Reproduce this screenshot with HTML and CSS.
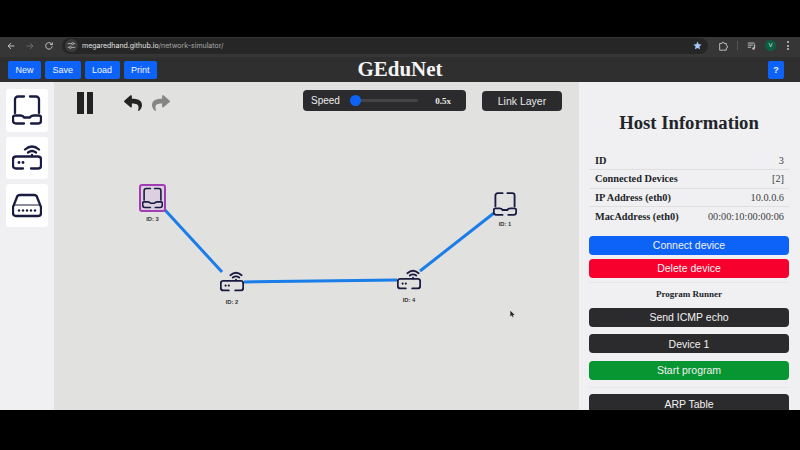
FILE: index.html
```html
<!DOCTYPE html>
<html lang="en">
<head>
  <meta charset="UTF-8">
  <meta name="viewport" content="width=device-width, initial-scale=1.0">
  <title>GEduNet</title>
  <link rel="stylesheet" href="styles.css">
</head>
<body>
  <svg class="defs" width="0" height="0">
    <symbol id="laptop" viewBox="0 0 30 30">
      <g fill="none" stroke="currentColor" stroke-width="2.300" stroke-linecap="round" stroke-linejoin="round">
        <path d="M12 1.500H6a3 3 0 0 0-3 3V18"/>
        <path d="M18 1.500h6a3 3 0 0 1 3 3V18"/>
        <path d="M12 28.500H4q-3 0-3-3v-3q0-2 2-2h5q3 0 4 2h6q1-2 4-2h5q2 0 2 2v3q0 3-3 3h-7"/>
      </g>
    </symbol>
    <symbol id="router" viewBox="0 0 30 30">
      <g fill="none" stroke="currentColor" stroke-width="2.300" stroke-linecap="round" stroke-linejoin="round">
        <path d="M13 6.500q7-6 14 0"/>
        <path d="M16 9.500q4-3 8 0"/>
        <path d="M20 12v1"/>
        <path d="M11 25.500H4q-3 0-3-3v-6q0-3 3-3h22q3 0 3 3v6q0 3-3 3h-7"/>
      </g>
      <circle cx="7" cy="19.500" r="1.400" fill="currentColor"/>
      <circle cx="11" cy="19.500" r="1.400" fill="currentColor"/>
    </symbol>
    <symbol id="switch" viewBox="0 0 30 30">
      <g fill="none" stroke="currentColor" stroke-width="2.300" stroke-linecap="round" stroke-linejoin="round">
        <path d="M1 17 5 7q.6-2 3-2h14q2.400 0 3 2l4 10v6q0 3-3 3H4q-3 0-3-3z"/>
        <path d="M3 15h24" stroke-width="1.200"/>
      </g>
      <g fill="currentColor">
        <circle cx="7" cy="20.500" r="1.200"/>
        <circle cx="11" cy="20.500" r="1.200"/>
        <circle cx="15" cy="20.500" r="1.200"/>
        <circle cx="19" cy="20.500" r="1.200"/>
        <circle cx="23" cy="20.500" r="1.200"/>
      </g>
    </symbol>
    <symbol id="reply" viewBox="0 0 512 512">
      <path fill="currentColor" d="M8.309 189.836L184.313 37.851C199.719 24.546 224 35.347 224 56.015v80.053c160.629 1.839 288 34.032 288 186.258 0 61.441-39.581 122.309-83.333 154.132-13.653 9.931-33.111-2.533-28.077-18.631 45.344-145.012-21.507-183.510-176.590-185.742V360c0 20.700-24.300 31.453-39.687 18.164l-176.004-152c-11.071-9.562-11.086-26.753 0-36.328z"/>
    </symbol>
  </svg>

  <div class="top-black"></div>

  <div class="browser">
    <div class="browser-nav">
      <svg class="b-icon" viewBox="0 0 12 12"><path d="M10 6H2.500M6 2.500 2.500 6 6 9.500" fill="none" stroke="#c4c4c4" stroke-width="1.200"/></svg>
      <svg class="b-icon" viewBox="0 0 12 12"><path d="M2 6h7.500M6 2.500 9.500 6 6 9.500" fill="none" stroke="#6c6c6c" stroke-width="1.200"/></svg>
      <svg class="b-icon" viewBox="0 0 12 12"><path d="M9.800 6.500A3.900 3.900 0 1 1 8.700 3.100L10 4.400M10 1.800v2.600H7.400" fill="none" stroke="#c4c4c4" stroke-width="1.200"/></svg>
    </div>
    <div class="address">
      <span class="tune">
        <svg viewBox="0 0 12 12"><path d="M1 3.500h5M9 3.500h2M1 8.500h2M6 8.500h5" stroke="#ccc" stroke-width="1" fill="none"/><circle cx="7.500" cy="3.500" r="1.400" fill="none" stroke="#ccc"/><circle cx="4.500" cy="8.500" r="1.400" fill="none" stroke="#ccc"/></svg>
      </span>
      <span class="url">megaredhand.github.io<span class="url-path">/network-simulator/</span></span>
      <svg class="star" viewBox="0 0 12 12"><path d="M6 .8 7.600 4.300l3.800.4-2.800 2.600.8 3.800L6 9.200l-3.400 1.900.8-3.800L.6 4.700l3.800-.4z" fill="#a8c7fa"/></svg>
    </div>
    <div class="browser-tools">
      <svg class="b-icon" viewBox="0 0 12 12"><path d="M2 3h2.500a1.500 1.500 0 0 1 3 0H10v2.500a1.500 1.500 0 0 1 0 3V11H2z" fill="none" stroke="#c8c8c8" stroke-width="1.100"/></svg>
      <span class="tool-sep"></span>
      <svg class="b-icon" viewBox="0 0 12 12"><path d="M1 2.500h8M1 5h6M1 7.500h4" stroke="#c0c0c0" stroke-width="1.200"/><path d="M9 4v4.500" stroke="#c0c0c0" stroke-width="1.500"/><circle cx="7.800" cy="9" r="1.500" fill="#c0c0c0"/></svg>
      <span class="avatar">V</span>
      <span class="dots"><i></i><i></i><i></i></span>
    </div>
  </div>

  <nav class="navbar">
    <div class="nav-left">
      <button class="nav-btn">New</button>
      <button class="nav-btn">Save</button>
      <button class="nav-btn">Load</button>
      <button class="nav-btn">Print</button>
    </div>
    <h1 class="brand">GEduNet</h1>
    <button class="nav-btn help">?</button>
  </nav>

  <main class="app">
    <aside class="palette">
      <div class="tile"><svg class="tile-icon"><use href="#laptop"/></svg></div>
      <div class="tile"><svg class="tile-icon"><use href="#router"/></svg></div>
      <div class="tile"><svg class="tile-icon"><use href="#switch"/></svg></div>
    </aside>

    <section class="canvas">
      <div class="controls">
        <div class="pause"><i></i><i></i></div>
        <div class="history">
          <svg class="arrow"><use href="#reply"/></svg>
          <svg class="arrow redo"><use href="#reply"/></svg>
        </div>
        <div class="speed">
          <span class="speed-label">Speed</span>
          <span class="track"><span class="thumb"></span></span>
          <span class="speed-value">0.5x</span>
        </div>
        <button class="layer-btn">Link Layer</button>
      </div>

      <svg class="links" width="525" height="328">
        <line x1="111" y1="128" x2="168" y2="190"/>
        <line x1="190" y1="200" x2="343" y2="198"/>
        <line x1="366" y1="189" x2="440" y2="131"/>
      </svg>

      <div class="node selected" style="left:85px;top:102px">
        <svg class="node-icon big"><use href="#laptop"/></svg>
        <span class="node-label">ID: 3</span>
      </div>
      <div class="node" style="left:439px;top:110px">
        <svg class="node-icon"><use href="#laptop"/></svg>
        <span class="node-label">ID: 1</span>
      </div>
      <div class="node" style="left:166px;top:188px">
        <svg class="node-icon"><use href="#router"/></svg>
        <span class="node-label">ID: 2</span>
      </div>
      <div class="node" style="left:343px;top:186px">
        <svg class="node-icon"><use href="#router"/></svg>
        <span class="node-label">ID: 4</span>
      </div>

      <svg class="cursor" width="5" height="8" viewBox="0 0 7 10"><path d="M.5.500v8l2-1.800 1.300 3 1.200-.5-1.300-2.900H6.500z" fill="#222"/></svg>
    </section>

    <aside class="info">
      <h2 class="info-title">Host Information</h2>
      <div class="rows">
        <div class="row"><b>ID</b><span>3</span></div>
        <div class="row"><b>Connected Devices</b><span>[2]</span></div>
        <div class="row"><b>IP Address (eth0)</b><span>10.0.0.6</span></div>
        <div class="row"><b>MacAddress (eth0)</b><span>00:00:10:00:00:06</span></div>
      </div>
      <button class="btn blue first">Connect device</button>
      <button class="btn red">Delete device</button>
      <hr class="divider">
      <h3 class="runner-title">Program Runner</h3>
      <button class="btn dark">Send ICMP echo</button>
      <button class="btn dark">Device 1</button>
      <button class="btn green">Start program</button>
      <hr class="divider">
      <button class="btn dark">ARP Table</button>
    </aside>
  </main>

  <div class="bottom-black"></div>
</body>
</html>
```

FILE: styles.css
```css
* {
  box-sizing: border-box;
}
html, body {
  height: 100%;
}
body {
  margin: 0;
  background: #000;
  font-family: 'Liberation Sans', Arial, sans-serif;
  display: flex;
  flex-direction: column;
  overflow: hidden;
}
.defs {
  position: absolute;
}
.top-black {
  height: 37px;
  flex: none;
}
.bottom-black {
  height: 40px;
  flex: none;
}

/* browser chrome */
.browser {
  height: 20px;
  flex: none;
  background: #363636;
  display: flex;
  align-items: center;
  padding-bottom: 3px;
}
.browser-nav {
  display: flex;
  gap: 9px;
  padding-left: 6px;
  width: 62px;
}
.b-icon {
  width: 10px;
  height: 10px;
  display: block;
}
.address {
  width: 646px;
  height: 16px;
  border-radius: 8px;
  background: #262626;
  display: flex;
  align-items: center;
  padding: 0 6px 0 3px;
}
.tune {
  width: 13px;
  height: 13px;
  border-radius: 50%;
  background: #3c3c3c;
  display: flex;
  align-items: center;
  justify-content: center;
  margin-right: 4px;
}
.tune svg {
  width: 9px;
  height: 9px;
}
.url {
  flex: 1;
  font-family: 'Inter', 'Liberation Sans', sans-serif;
  font-size: 7px;
  color: #e3e3e3;
}
.url-path {
  color: #a9a9a9;
}
.star {
  width: 9px;
  height: 9px;
}
.browser-tools {
  flex: 1;
  display: flex;
  align-items: center;
  padding-left: 10px;
}
.tool-sep {
  width: 1px;
  height: 9px;
  background: #555;
  margin: 0 9px;
}
.avatar {
  width: 11px;
  height: 11px;
  border-radius: 50%;
  background: #0c5e42;
  color: #cfe8d8;
  font-size: 6px;
  text-align: center;
  line-height: 11px;
  margin-left: 8px;
}
.dots {
  display: flex;
  flex-direction: column;
  gap: 1.500px;
  margin-left: 11px;
}
.dots i {
  width: 2px;
  height: 2px;
  border-radius: 50%;
  background: #c8c8c8;
}

/* app navbar */
.navbar {
  height: 25px;
  flex: none;
  background: #2f2f2f;
  display: flex;
  align-items: center;
  justify-content: space-between;
  padding: 0 16px 0 8px;
  position: relative;
}
.nav-left {
  display: flex;
  gap: 4px;
}
.nav-btn {
  height: 18px;
  padding: 0 7.500px;
  border: none;
  border-radius: 2px;
  background: #0d63f8;
  color: #f0f4ff;
  font-family: inherit;
  font-size: 9px;
}
.help {
  width: 16px;
  padding: 0;
  font-weight: bold;
}
.brand {
  position: absolute;
  left: 0;
  right: 0;
  margin: 0;
  text-align: center;
  font-family: 'Liberation Serif', serif;
  font-size: 21px;
  color: #f4f4f4;
  pointer-events: none;
}

/* main */
.app {
  flex: 1;
  min-height: 0;
  display: flex;
}
.palette {
  width: 54px;
  flex: none;
  background: #f0eff1;
  display: flex;
  flex-direction: column;
  gap: 5px;
  padding: 7px 6px 0;
}
.tile {
  width: 42px;
  height: 42.500px;
  background: #fff;
  border-radius: 3px;
  display: flex;
  align-items: center;
  justify-content: center;
}
.tile-icon {
  width: 30px;
  height: 30px;
  color: #1a1b41;
}
.canvas {
  flex: 1;
  background: #e1e1df;
  position: relative;
}
.controls {
  display: flex;
  align-items: center;
  height: 22px;
  margin-top: 10px;
  padding-left: 23px;
  position: relative;
  z-index: 1;
}
.pause {
  display: flex;
  gap: 3px;
  width: 47px;
}
.pause i {
  width: 6.500px;
  height: 22px;
  background: #222;
}
.history {
  display: flex;
  gap: 10px;
  width: 179px;
}
.arrow {
  width: 18px;
  height: 18px;
  color: #232323;
}
.redo {
  color: #858585;
  transform: scaleX(-1);
}
.speed {
  width: 163px;
  height: 21px;
  border-radius: 4px;
  background: #2b2b2d;
  display: flex;
  align-items: center;
  align-self: flex-start;
  padding: 0 15px 0 8px;
  color: #ececec;
  font-size: 10px;
  margin: -2px 16px 0 0;
}
.speed-label {
  width: 39px;
}
.track {
  width: 68px;
  height: 3px;
  border-radius: 2px;
  background: #444;
  position: relative;
}
.thumb {
  position: absolute;
  left: 0;
  top: -4px;
  width: 11px;
  height: 11px;
  border-radius: 50%;
  background: #0d63f8;
}
.speed-value {
  flex: 1;
  text-align: right;
  font-family: 'Liberation Serif', serif;
  font-weight: bold;
  font-size: 9px;
}
.layer-btn {
  width: 80px;
  height: 20px;
  border: none;
  border-radius: 4px;
  background: #2b2b2d;
  color: #e8e8e8;
  font-family: inherit;
  font-size: 10.500px;
  align-self: flex-start;
  margin-top: -1px;
}
.links {
  position: absolute;
  left: 0;
  top: 0;
}
.links line {
  stroke: #1a7de8;
  stroke-width: 3;
}
.node {
  position: absolute;
  display: flex;
  flex-direction: column;
  align-items: center;
  width: 24px;
}
.node-icon {
  width: 24px;
  height: 24px;
  color: #1a1b41;
}
.node-label {
  margin-top: 5px;
  font-size: 5.800px;
  font-weight: bold;
  color: #333;
  white-space: nowrap;
}
.selected {
  width: 27px;
}
.selected .node-icon {
  width: 27px;
  height: 28px;
  padding: 1px;
  border: 2px solid #a23cb4;
  border-radius: 3px;
  background: #dccfe0;
}
.selected .node-label {
  margin-top: 4px;
}
.cursor {
  position: absolute;
  left: 456px;
  top: 228px;
}

/* host info panel */
.info {
  width: 221px;
  flex: none;
  background: #f0eff1;
  padding: 30px 11px 0 10px;
  overflow: hidden;
}
.info-title {
  margin: 0 0 19px;
  height: 21px;
  line-height: 21px;
  text-align: center;
  font-family: 'Liberation Serif', serif;
  font-size: 18.700px;
  color: #212529;
}
.rows {
  font-family: 'Liberation Serif', serif;
  font-size: 10.300px;
  color: #212529;
}
.row {
  display: flex;
  justify-content: space-between;
  align-items: center;
  height: 18.300px;
  padding: 0 5px 0 6px;
  border-bottom: 1px solid #dfdfe0;
}
.row:last-child {
  border-bottom: none;
}
.row span {
  color: #3b3f44;
}
.btn {
  display: block;
  width: 100%;
  height: 19px;
  border: none;
  border-radius: 4px;
  color: #f2f2f2;
  font-family: inherit;
  font-size: 10.500px;
  margin-bottom: 7.500px;
}
.first {
  margin-top: 10.500px;
}
.blue {
  background: #0d63f8;
  margin-bottom: 4px;
}
.red {
  background: #f7002e;
  margin-bottom: 4px;
}
.dark {
  background: #2b2b2d;
}
.green {
  background: #079631;
}
.divider {
  border: none;
  border-top: 1px solid #e6e5e7;
  margin: 0 0 6px;
}
.runner-title {
  margin: 1px 0 9px;
  height: 10px;
  line-height: 10px;
  text-align: center;
  font-family: 'Liberation Serif', serif;
  font-size: 9px;
  color: #212529;
}
```
